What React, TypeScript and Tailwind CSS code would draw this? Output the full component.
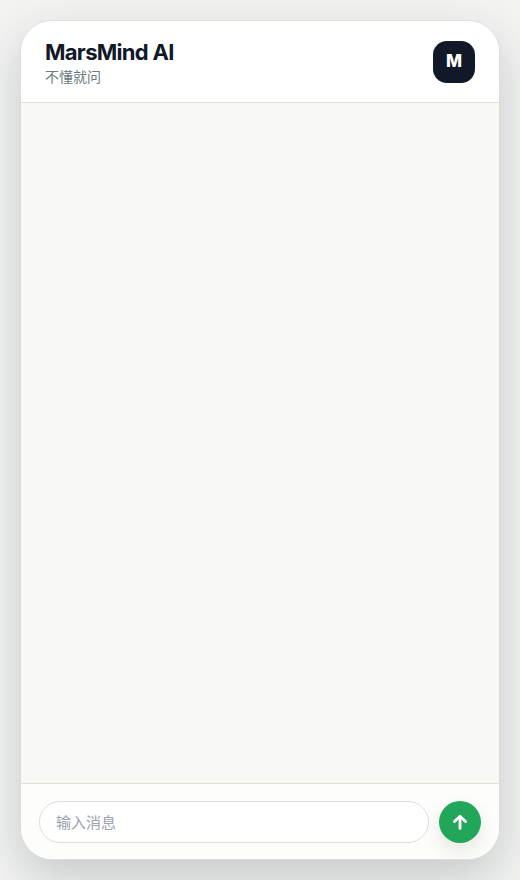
import React from "react";

export default function App() {
  return (
    <div className="h-[880px] w-[520px] bg-[#f3f4f2] p-5 font-['Inter','Noto_Sans_CJK_SC',sans-serif] antialiased">
      <div className="flex h-[840px] flex-col overflow-hidden rounded-[32px] border border-[#dcdfd6] bg-[#f8f9f5] shadow-[0_18px_50px_rgba(15,23,42,0.2)]">
        <header className="flex h-[82px] shrink-0 items-center justify-between border-b border-[#dcdfd6] bg-white pl-6 pr-6">
          <div className="flex flex-col pt-[2px]">
            <div className="text-[22px] leading-[26px] font-bold tracking-[-0.7px] text-[#111827]">MarsMind AI</div>
            <div className="mt-[2px] text-[14px] leading-[20px] text-[#6b7a80]">不懂就问</div>
          </div>
          <div className="flex h-[42px] w-[42px] items-center justify-center rounded-[14px] bg-[#111827] text-[17px] font-extrabold text-white">M</div>
        </header>
        <main className="flex-1" />
        <footer className="flex h-[76px] shrink-0 items-start gap-[10px] border-t border-[#dcdfd6] bg-[#fdfdfb] pl-[18px] pr-[18px] pt-[17px]">
          <input
            placeholder="输入消息"
            className="h-[42px] min-w-0 flex-1 rounded-full border border-[#dcdfd6] bg-white px-4 text-[15px] text-[#111827] outline-none placeholder:text-[#9ca3af]"
          />
          <button className="flex h-[42px] w-[42px] shrink-0 items-center justify-center rounded-full bg-[#22a65a] shadow-[0_8px_20px_rgba(15,23,42,0.1)]">
            <svg width="18" height="18" viewBox="0 0 18 18" fill="none" stroke="white" strokeWidth="2.8" strokeLinecap="round" strokeLinejoin="round">
              <path d="M9 15.5V4" />
              <path d="M3.5 8.5L9 3.2l5.500 5.300" />
            </svg>
          </button>
        </footer>
      </div>
    </div>
  );
}
